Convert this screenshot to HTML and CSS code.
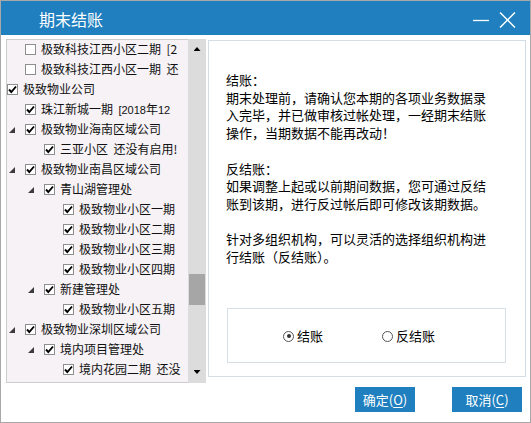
FILE: index.html
```html
<!DOCTYPE html>
<html lang="zh-CN">
<head>
<meta charset="utf-8">
<title>期末结账</title>
<link rel="stylesheet" href="styles.css">
</head>
<body>
<div class="window">
  <div class="titlebar">
    <span class="title">期末结账</span>
    <div class="controls">
      <svg class="ctl" width="16" height="16" viewBox="0 0 16 16"><line x1="0" y1="8.5" x2="16" y2="8.5" stroke="#fff" stroke-width="1.3"/></svg>
      <svg class="ctl" width="17" height="16" viewBox="0 0 17 16"><line x1="1" y1="0.5" x2="16" y2="15.5" stroke="#fff" stroke-width="1.5"/><line x1="16" y1="0.5" x2="1" y2="15.5" stroke="#fff" stroke-width="1.5"/></svg>
    </div>
  </div>
  <div class="body">
    <div class="tree">
      <div class="tree-content">
        <div class="row l1"><span class="cb"></span><span class="txt">极致科技江西小区二期&nbsp; [2</span></div>
        <div class="row l1"><span class="cb"></span><span class="txt">极致科技江西小区一期&nbsp; 还</span></div>
        <div class="row l0"><span class="cb on"><svg width="9" height="9" viewBox="0 0 9 9"><polyline points="1,4.5 3.3,7 8,1.5" fill="none" stroke="#000" stroke-width="1.9"/></svg></span><span class="txt">极致物业公司</span></div>
        <div class="row l1"><span class="cb on"><svg width="9" height="9" viewBox="0 0 9 9"><polyline points="1,4.5 3.3,7 8,1.5" fill="none" stroke="#000" stroke-width="1.9"/></svg></span><span class="txt">珠江新城一期&nbsp; <span class="num">[2018</span>年<span class="num">12</span></span></div>
        <div class="row l1"><span class="exp"></span><span class="cb on"><svg width="9" height="9" viewBox="0 0 9 9"><polyline points="1,4.5 3.3,7 8,1.5" fill="none" stroke="#000" stroke-width="1.9"/></svg></span><span class="txt">极致物业海南区域公司</span></div>
        <div class="row l2"><span class="cb on"><svg width="9" height="9" viewBox="0 0 9 9"><polyline points="1,4.5 3.3,7 8,1.5" fill="none" stroke="#000" stroke-width="1.9"/></svg></span><span class="txt">三亚小区&nbsp; 还没有启用!</span></div>
        <div class="row l1"><span class="exp"></span><span class="cb on"><svg width="9" height="9" viewBox="0 0 9 9"><polyline points="1,4.5 3.3,7 8,1.5" fill="none" stroke="#000" stroke-width="1.9"/></svg></span><span class="txt">极致物业南昌区域公司</span></div>
        <div class="row l2"><span class="exp"></span><span class="cb on"><svg width="9" height="9" viewBox="0 0 9 9"><polyline points="1,4.5 3.3,7 8,1.5" fill="none" stroke="#000" stroke-width="1.9"/></svg></span><span class="txt">青山湖管理处</span></div>
        <div class="row l3"><span class="cb on"><svg width="9" height="9" viewBox="0 0 9 9"><polyline points="1,4.5 3.3,7 8,1.5" fill="none" stroke="#000" stroke-width="1.9"/></svg></span><span class="txt">极致物业小区一期</span></div>
        <div class="row l3"><span class="cb on"><svg width="9" height="9" viewBox="0 0 9 9"><polyline points="1,4.5 3.3,7 8,1.5" fill="none" stroke="#000" stroke-width="1.9"/></svg></span><span class="txt">极致物业小区二期</span></div>
        <div class="row l3"><span class="cb on"><svg width="9" height="9" viewBox="0 0 9 9"><polyline points="1,4.5 3.3,7 8,1.5" fill="none" stroke="#000" stroke-width="1.9"/></svg></span><span class="txt">极致物业小区三期</span></div>
        <div class="row l3"><span class="cb on"><svg width="9" height="9" viewBox="0 0 9 9"><polyline points="1,4.5 3.3,7 8,1.5" fill="none" stroke="#000" stroke-width="1.9"/></svg></span><span class="txt">极致物业小区四期</span></div>
        <div class="row l2"><span class="exp"></span><span class="cb on"><svg width="9" height="9" viewBox="0 0 9 9"><polyline points="1,4.5 3.3,7 8,1.5" fill="none" stroke="#000" stroke-width="1.9"/></svg></span><span class="txt">新建管理处</span></div>
        <div class="row l3"><span class="cb on"><svg width="9" height="9" viewBox="0 0 9 9"><polyline points="1,4.5 3.3,7 8,1.5" fill="none" stroke="#000" stroke-width="1.9"/></svg></span><span class="txt">极致物业小区五期</span></div>
        <div class="row l1"><span class="exp"></span><span class="cb on"><svg width="9" height="9" viewBox="0 0 9 9"><polyline points="1,4.5 3.3,7 8,1.5" fill="none" stroke="#000" stroke-width="1.9"/></svg></span><span class="txt">极致物业深圳区域公司</span></div>
        <div class="row l2"><span class="exp"></span><span class="cb on"><svg width="9" height="9" viewBox="0 0 9 9"><polyline points="1,4.5 3.3,7 8,1.5" fill="none" stroke="#000" stroke-width="1.9"/></svg></span><span class="txt">境内项目管理处</span></div>
        <div class="row l3"><span class="cb on"><svg width="9" height="9" viewBox="0 0 9 9"><polyline points="1,4.5 3.3,7 8,1.5" fill="none" stroke="#000" stroke-width="1.9"/></svg></span><span class="txt">境内花园二期&nbsp; 还没</span></div>
      </div>
      <div class="scrollbar">
        <span class="arrow up"></span>
        <div class="track"><div class="thumb"></div></div>
        <span class="arrow down"></span>
      </div>
    </div>
    <div class="right">
      <div class="panel">
        <p class="desc">结账：<br>期末处理前，请确认您本期的各项业务数据录<br>入完毕，并已做审核过帐处理，一经期末结账<br>操作，当期数据不能再改动！<br><br>反结账：<br>如果调整上起或以前期间数据，您可通过反结<br>账到该期，进行反过帐后即可修改该期数据。<br><br>针对多组织机构，可以灵活的选择组织机构进<br>行结账（反结账）。</p>
        <div class="group">
          <label class="radio"><span class="circle checked"></span>结账</label>
          <label class="radio"><span class="circle"></span>反结账</label>
        </div>
      </div>
      <div class="footer">
        <button class="btn ok">确定(<u>O</u>)</button>
        <button class="btn cancel">取消(<u>C</u>)</button>
      </div>
    </div>
  </div>
</div>
</body>
</html>
```
FILE: styles.css
```css
* { box-sizing: border-box; }
html, body { margin: 0; padding: 0; background: #fff; }
body { font-family: "Noto Sans CJK SC", "Noto Sans", sans-serif; color: #000; }

.window {
  width: 531px;
  height: 423px;
  border: 1px solid #a8a8a8;
  background: #fff;
  display: flex;
  flex-direction: column;
  overflow: hidden;
}

.titlebar {
  height: 34px;
  background: #1f7fbf;
  display: flex;
  align-items: center;
  padding-left: 38px;
  padding-right: 14px;
  flex: none;
}
.title { color: #fff; font-size: 16px; line-height: 20px; margin-top: 2px; }
.controls { margin-left: auto; display: flex; align-items: center; gap: 10px; margin-top: 3px; }
.ctl { display: block; }

.body {
  flex: 1;
  display: flex;
  padding: 4px 4px 0 5px;
  gap: 2px;
}

.tree {
  width: 200px;
  height: 344px;
  display: flex;
  border: 1px solid #cccccc;
  border-right: none;
  background: #f6f2f6;
  flex: none;
}
.tree-content {
  width: 181px;
  overflow: hidden;
  margin-top: -1px;
  font-size: 12px;
  white-space: nowrap;
}
.row {
  height: 20px;
  display: flex;
  align-items: center;
}
.row.l0 { padding-left: 0; }
.row.l1 { padding-left: 18px; }
.row.l2 { padding-left: 37px; }
.row.l3 { padding-left: 56px; }
.exp {
  width: 6px;
  height: 6px;
  margin-left: -16px;
  margin-right: 10px;
  margin-top: 2px;
  background: #3c3c3c;
  clip-path: polygon(100% 0, 100% 100%, 0 100%);
  flex: none;
}
.cb {
  width: 11px;
  height: 11px;
  border: 1px solid #8e8e8e;
  background: #fff;
  flex: none;
  display: flex;
  align-items: center;
  justify-content: center;
  margin-right: 5px;
}
.cb svg { display: block; }
.txt { line-height: 20px; color: #111; }
.num { font-family: "Liberation Sans", sans-serif; font-size: 11px; }

.scrollbar {
  width: 18px;
  background: #dcdcdc;
  display: flex;
  flex-direction: column;
  align-items: center;
  margin-top: -1px;
  margin-bottom: -1px;
}
.arrow {
  width: 7px;
  height: 4px;
  background: #000;
  flex: none;
}
.arrow.up { clip-path: polygon(50% 0, 100% 100%, 0 100%); margin-top: 8px; }
.arrow.down { clip-path: polygon(0 0, 100% 0, 50% 100%); margin-bottom: 9px; }
.track { flex: 1; width: 100%; padding: 223px 1px 0 1px; }
.thumb { height: 31px; background: #a6a6a6; }

.right {
  flex: 1;
  display: flex;
  flex-direction: column;
  padding-top: 1px;
}
.panel {
  height: 337px;
  border: 1px solid #d3dde6;
  display: flex;
  flex-direction: column;
}
.desc {
  margin: 0;
  padding: 30px 0 0 17px;
  font-size: 13px;
  line-height: 17.7px;
  color: #000;
  white-space: nowrap;
  font-variant-east-asian: full-width;
}
.group {
  margin: auto 19px 13px 18px;
  height: 55px;
  border: 1px solid #d6dee6;
  display: flex;
  align-items: center;
  padding-left: 55px;
  gap: 59px;
}
.radio {
  display: flex;
  align-items: center;
  font-size: 13px;
  line-height: 18px;
  color: #000;
  margin-top: 1px;
}
.circle {
  width: 11px;
  height: 11px;
  border: 1px solid #555;
  border-radius: 50%;
  background: #fff;
  margin-right: 3px;
  display: flex;
  align-items: center;
  justify-content: center;
}
.circle.checked::after {
  content: "";
  width: 4px;
  height: 4px;
  border-radius: 50%;
  background: #333;
}

.footer {
  display: flex;
  justify-content: flex-end;
  gap: 37px;
  margin-top: 10px;
  padding-right: 4px;
}
.btn {
  height: 25px;
  border: none;
  background: #1f7fbf;
  color: #fff;
  font-family: "Noto Sans CJK SC", "Noto Sans", sans-serif;
  font-size: 13px;
  padding: 0;
  line-height: 25px;
}
.btn.ok { width: 60px; }
.btn.cancel { width: 70px; }
.btn u { text-underline-offset: 2px; }
```
